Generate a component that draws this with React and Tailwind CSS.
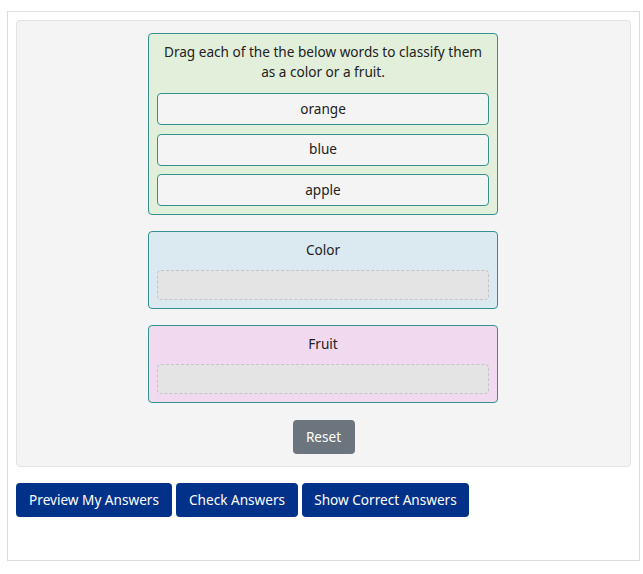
import React from "react";

const words = ["orange", "blue", "apple"];
const buckets = [
  { name: "Color", bg: "bg-[#dbe9f0]" },
  { name: "Fruit", bg: "bg-[#f1daef]" },
];

const App = () => {
  return (
    <div className="min-h-screen bg-white pt-[11px] pl-[7px] font-['Noto_Sans',sans-serif] text-[13.6px] text-[#222]">
      <div className="w-[633px] h-[550px] border border-[#dddddd] p-2">
        {/* Activity area */}
        <div className="bg-[#f4f4f4] border border-[#e3e3e3] rounded-[4px] pt-3 pb-3 flex flex-col items-center">
          <div className="w-[350px] mr-px bg-[#e2efda] border border-[#33918f] rounded-[4px] px-2 pt-2 pb-2">
            <p className="text-center leading-[20px]">
              Drag each of the the below words to classify them as a color or a fruit.
            </p>
            <div className="mt-[11px] flex flex-col gap-[8.5px]">
              {words.map((w) => (
                <div
                  key={w}
                  className="h-[32px] bg-[#f4f4f4] border border-[#33918f] rounded-[4px] flex items-center justify-center"
                >
                  {w}
                </div>
              ))}
            </div>
          </div>

          {buckets.map((b) => (
            <div
              key={b.name}
              className={`w-[350px] mr-px mt-4 ${b.bg} border border-[#33918f] rounded-[4px] px-2 pt-2 pb-2`}
            >
              <div className="text-center leading-[20px]">{b.name}</div>
              <div className="mt-[10px] h-[30px] bg-[#e4e4e4] border border-dashed border-[#c4c4c4] rounded-[4px]" />
            </div>
          ))}

          <button className="mt-[17px] w-[62px] h-[34px] bg-[#6c757d] text-white rounded-[4px]">
            Reset
          </button>
        </div>

        <div className="mt-4 flex gap-1">
          <button className="h-[34px] w-[156px] bg-[#02318a] text-white rounded-[4px]">
            Preview My Answers
          </button>
          <button className="h-[34px] w-[122px] bg-[#02318a] text-white rounded-[4px]">
            Check Answers
          </button>
          <button className="h-[34px] w-[167px] bg-[#02318a] text-white rounded-[4px]">
            Show Correct Answers
          </button>
        </div>
      </div>
    </div>
  );
};

export default App;
